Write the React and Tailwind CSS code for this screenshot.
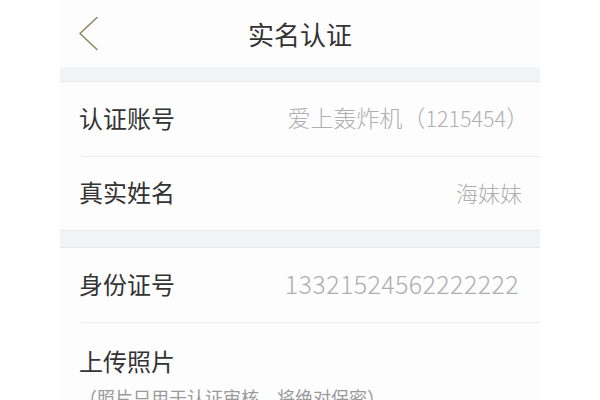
import React from "react";

const font = { fontFamily: '"Noto Sans CJK SC", "Noto Sans", sans-serif' };

function Row({ label, children, divider, h = "h-[74px]" }) {
  return (
    <div className="shrink-0 flex flex-col">
      <div className={`${h} flex items-center justify-between pl-[19px] pr-[18px] pb-[3px]`}>
        <span className="text-[24px] leading-none text-[#333333] whitespace-nowrap">{label}</span>
        <span className="leading-none text-[#afafaf] font-light whitespace-nowrap">{children}</span>
      </div>
      {divider && <div className="ml-[22px] h-px bg-[#ececec]" />}
    </div>
  );
}

export default function App() {
  return (
    <div className="w-[600px] h-[400px] bg-white flex justify-center overflow-hidden" style={font}>
      <div className="w-[480px] bg-[#fdfdfe] flex flex-col">
        <div className="shrink-0 h-[67px] grid grid-cols-[1fr_auto_1fr] items-center">
          <div className="pl-[18px] flex items-center">
            <svg width="22" height="36" viewBox="0 0 22 36" fill="none">
              <path d="M19 1.5 L2 17.5 L19 33.5" stroke="#8c8a5e" strokeWidth="1.6" strokeLinecap="round" strokeLinejoin="round" />
            </svg>
          </div>
          <div className="text-[26px] leading-none text-[#333333]">实名认证</div>
          <div />
        </div>
        <div className="shrink-0 h-[15px] bg-[#f2f3f5] border-b border-[#e6e6e6]" />
        <Row label="认证账号" divider>
          <span className="text-[23px] -mr-[7px]">
            爱上轰炸机（<span className="text-[21.5px]">1215454</span>）
          </span>
        </Row>
        <Row label="真实姓名" h="h-[73px]">
          <span className="text-[22px]">海妹妹</span>
        </Row>
        <div className="shrink-0 h-[18px] bg-[#f2f3f5] border-y border-[#e6e6e6]" />
        <Row label="身份证号" divider>
          <span className="text-[25px] tracking-[0.4px] mr-[3px]">13321524562222222</span>
        </Row>
        <div className="shrink-0 pl-[19px] pt-[26px] flex flex-col gap-[15px]">
          <span className="text-[24px] leading-none text-[#333333]">上传照片</span>
          <span className="text-[18px] leading-none text-[#9a9a9a] whitespace-nowrap">（照片只用于认证审核，将绝对保密）</span>
        </div>
      </div>
    </div>
  );
}
